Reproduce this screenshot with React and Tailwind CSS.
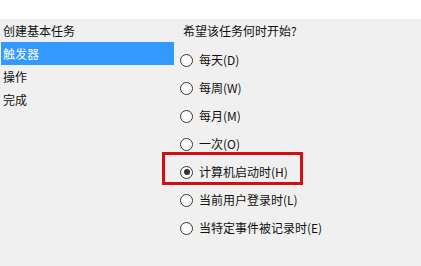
import React from "react";

const steps = ["创建基本任务", "触发器", "操作", "完成"];

const options = [
  { label: "每天(D)" },
  { label: "每周(W)" },
  { label: "每月(M)" },
  { label: "一次(O)" },
  { label: "计算机启动时(H)", checked: true, marked: true },
  { label: "当前用户登录时(L)" },
  { label: "当特定事件被记录时(E)" },
];

const Radio = ({ checked }) => (
  <span className="w-[13px] h-[13px] rounded-full border border-[#333] bg-white flex items-center justify-center shrink-0">
    {checked && <span className="w-[6px] h-[6px] rounded-full bg-[#333]" />}
  </span>
);

export default function App() {
  return (
    <div
      className="w-[421px] h-[266px] bg-[#f0f0f0] text-[12px] text-[#111] flex flex-col overflow-hidden"
      style={{ fontFamily: '"Noto Sans CJK SC", "Microsoft YaHei", sans-serif' }}
    >
      <div className="h-[19px] bg-white shrink-0" />
      <div className="flex flex-1">
        {/* left wizard steps */}
        <div className="w-[174px] pl-px">
          {steps.map((s, i) => (
            <div
              key={s}
              className={`h-[23px] flex items-center pl-[2px] ${i === 1 ? "bg-[#3399ff] text-white" : ""}`}
            >
              {s}
            </div>
          ))}
        </div>

        {/* right options */}
        <div className="flex-1">
          <div className="h-[27px] leading-[24px] pl-[9px]">希望该任务何时开始?</div>
          {options.map((o) => (
            <div key={o.label} className="relative h-[28px] flex items-center gap-[6px] pl-[6px]">
              <Radio checked={o.checked} />
              <span>{o.label}</span>
              {o.marked && (
                <div className="absolute left-[-12px] top-[-6px] w-[141px] h-[33px] border-[3px] border-[#d01010]" />
              )}
            </div>
          ))}
        </div>
      </div>
    </div>
  );
}
